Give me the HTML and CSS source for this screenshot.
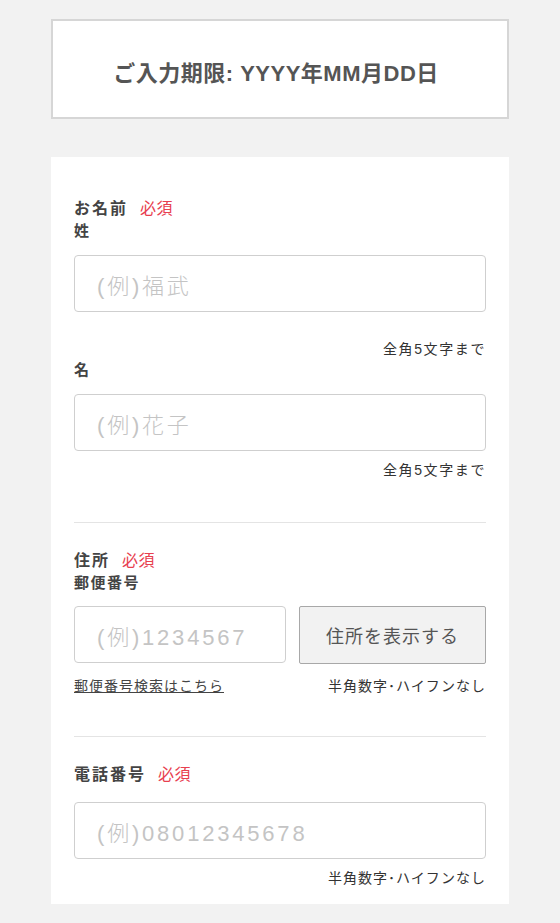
FILE: index.html
```html
<!DOCTYPE html>
<html lang="ja">
<head>
<meta charset="utf-8">
<link rel="stylesheet" href="styles.css">
</head>
<body>
<div class="page">
  <div class="deadline">ご入力期限: YYYY年MM月DD日</div>
  <div class="card">
    <div class="label">お名前<span class="req">必須</span></div>
    <div class="sublabel">姓</div>
    <div class="input first-input">(例)福武</div>
    <div class="note wide note-first">全角5文字まで</div>
    <div class="sublabel">名</div>
    <div class="input first-input">(例)花子</div>
    <div class="note wide note-second">全角5文字まで</div>
    <div class="divider div1"></div>
    <div class="label">住所<span class="req">必須</span></div>
    <div class="sublabel">郵便番号</div>
    <div class="zip-row">
      <div class="input zip-input">(例)1234567</div>
      <div class="zip-btn">住所を表示する</div>
    </div>
    <div class="help-row">
      <a class="link">郵便番号検索はこちら</a>
      <span class="note-inline">半角数字･ハイフンなし</span>
    </div>
    <div class="divider div2"></div>
    <div class="label">電話番号<span class="req">必須</span></div>
    <div class="input tel-input">(例)08012345678</div>
    <div class="note note-second">半角数字･ハイフンなし</div>
  </div>
</div>
</body>
</html>
```
FILE: styles.css
```css
* { box-sizing: border-box; }
html, body { margin: 0; padding: 0; }
body {
  background: #f2f2f2;
  font-family: "Liberation Sans", "Noto Sans CJK JP", sans-serif;
  color: #333;
}
.page {
  padding: 19px 51px 18px;
}
.deadline {
  height: 100px;
  background: #fff;
  border: 2px solid #d6d6d6;
  display: flex;
  align-items: center;
  justify-content: center;
  font-size: 22px;
  font-weight: 700;
  color: #555;
  letter-spacing: 0.5px;
  padding-top: 3px;
  padding-right: 8px;
}
.card {
  margin-top: 38px;
  background: #fff;
  padding: 41px 23px 16px;
}
.label {
  font-size: 16px;
  line-height: 22px;
  font-weight: 700;
  color: #444;
  letter-spacing: 2px;
}
.req {
  color: #e8404f;
  font-weight: 400;
  margin-left: 12px;
  font-size: 16px;
  letter-spacing: 0.5px;
}
.sublabel {
  font-size: 15px;
  line-height: 22px;
  font-weight: 700;
  color: #444;
  letter-spacing: 1.5px;
}
.input {
  height: 57px;
  border: 1px solid #cfcfcf;
  border-radius: 4px;
  display: flex;
  align-items: center;
  padding-left: 22px;
  font-size: 22px;
  font-weight: 300;
  color: #c4c4c4;
  letter-spacing: 2.8px;
}
.first-input { margin-top: 13px; }
.note {
  text-align: right;
  font-size: 14px;
  line-height: 20px;
  color: #333;
  letter-spacing: 1px;
}
.note.wide { letter-spacing: 1.6px; }
.note-first { margin-top: 27px; }
.note-second { margin-top: 9px; }
.divider {
  height: 1px;
  background: #e4e4e4;
}
.div1 { margin-top: 42px; margin-bottom: 27px; }
.div2 { margin-top: 40px; margin-bottom: 27px; }
.zip-row {
  margin-top: 12px;
  display: flex;
  gap: 13px;
}
.zip-input { width: 212px; flex: none; }
.zip-btn {
  flex: 1;
  height: 58px;
  background: #f2f2f2;
  border: 1px solid #a8a8a8;
  border-radius: 2px;
  display: flex;
  align-items: center;
  justify-content: center;
  font-size: 18px;
  color: #555;
  letter-spacing: 1px;
}
.help-row {
  margin-top: 12px;
  display: flex;
  justify-content: space-between;
  font-size: 14px;
  line-height: 20px;
  letter-spacing: 1px;
}
.link {
  color: #444;
  text-decoration: underline;
}
.note-inline { color: #333; }
.tel-input { margin-top: 16px; }
```
